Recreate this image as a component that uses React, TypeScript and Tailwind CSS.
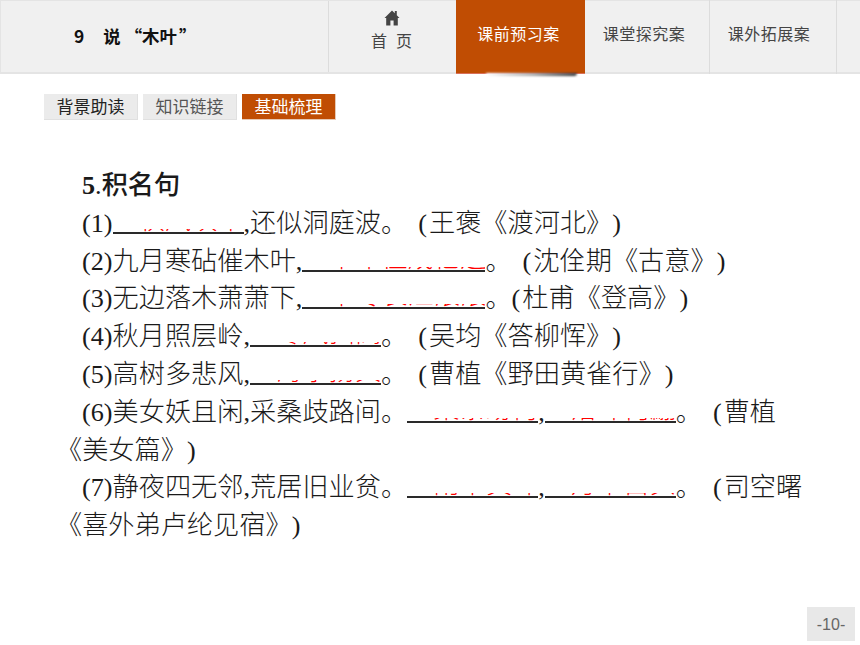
import React from 'react';

const uiFont = "font-['Liberation_Sans','Noto_Sans_CJK_SC',sans-serif]";

// answer text is cut off by the blank: only the feet of the red glyphs show above the line
const Blank: React.FC<{ width: string; text: string }> = ({ width, text }) => (
  <span className={`inline-block ${width} h-[5px] -mb-[2px] overflow-hidden border-b-2 border-[#2a2a2a] align-baseline`}>
    <span className="block -mt-[27px] whitespace-nowrap text-[#ff0000] tracking-[0.2px]">{text}</span>
  </span>
);

const Gap: React.FC = () => <span className="inline-block w-[11px]" />;

const topTabs = [
  { label: '课前预习案', width: 'w-[129px] pr-[4px]', active: true },
  { label: '课堂探究案', width: 'w-[125px] pr-[6px]', active: false },
  { label: '课外拓展案', width: 'w-[127px] pr-[8px]', active: false },
];

const subTabs = [
  { label: '背景助读', active: false, dark: true },
  { label: '知识链接', active: false, dark: false },
  { label: '基础梳理', active: true, dark: false },
];

const App: React.FC = () => {
  return (
    <div className={`w-[860px] h-[645px] bg-white flex flex-col overflow-hidden [text-spacing-trim:space-all] ${uiFont}`}>
      <header className="h-[74px] shrink-0 flex bg-[#f0f0f0] border-t border-b-2 border-[#e4e4e4]">
        <div className="w-[328px] flex items-center pl-[73px] text-[17.4px] font-bold text-[#111] border-l border-[#e4e4e4] font-['Noto_Sans_CJK_SC',sans-serif]">
          <span className="mr-[19px]">9</span>
          <span>说<span className="ml-[4px]">“</span>木叶<span className="ml-[2px]">”</span></span>
        </div>
        <div className="w-[128px] flex flex-col items-center pr-[2px] border-l border-[#dcdcdc] text-[#444]">
          <svg viewBox="0 0 16 16" className="w-[16px] h-[16px] mt-[9px] fill-[#444]">
            <path d="M8 0.5 L10.8 3.2 L10.8 1 L12.8 1 L12.8 5.2 L15.5 8 L13.8 8 L13.8 15.5 L9.6 15.5 L9.6 10.5 L6.4 10.5 L6.4 15.5 L2.2 15.5 L2.2 8 L0.5 8 Z" />
          </svg>
          <span className="mt-[6px] text-[16px] leading-[20px] whitespace-pre">首  页</span>
        </div>
        {topTabs.map((tab) => (
          <div
            key={tab.label}
            className={`${tab.width} relative -mt-px -mb-[2px] pb-[4px] flex items-center justify-center text-[16px] tracking-[0.5px] ${
              tab.active ? 'bg-[#c04d03] text-white border-b border-[#d9705a]' : 'text-[#444] border-r border-[#dcdcdc]'
            }`}
          >
            {tab.label}
            {tab.active && (
              <div className="absolute left-[30px] right-[8px] top-full h-[3px] rounded-b-full blur-[1px] bg-gradient-to-r from-white via-[#aaa] to-[#333]" />
            )}
          </div>
        ))}
        <div className="flex-1" />
      </header>

      <nav className="flex gap-[5px] pl-[44px] pt-[20px]">
        {subTabs.map((tab) => (
          <div
            key={tab.label}
            className={`w-[94px] h-[26px] pt-[2px] flex items-center justify-center text-[17px] border-b border-r ${
              tab.active
                ? 'bg-[#c04d03] text-white border-[#e6c9b5]'
                : `bg-[#ebebeb] border-[#e0e0e0] ${tab.dark ? 'text-[#222]' : 'text-[#555]'}`
            }`}
          >
            {tab.label}
          </div>
        ))}
      </nav>

      <main className="pl-[56px] pt-[47px] w-[820px] text-[26.2px] leading-[37.8px] text-[#1a1a1a] font-light font-['Liberation_Serif','Noto_Sans_CJK_SC',serif]">
        <p className="pl-[26px] font-medium"><b>5</b>.积名句</p>
        <p className="indent-[26px]">(1)<Blank width="w-[131px]" text="秋风吹木叶" />,还似洞庭波。<Gap />(<span className="ml-[2px]">王褒《渡河北》)</span></p>
        <p className="indent-[26px]">(2)九月寒砧催木叶,<Blank width="w-[183px]" text="十年征戍忆辽阳" />。<Gap />(<span className="ml-[2px]">沈佺期《古意》)</span></p>
        <p className="indent-[26px]">(3)无边落木萧萧下,<Blank width="w-[183px]" text="不尽长江滚滚来" />。(<span className="ml-[2px]">杜甫《登高》)</span></p>
        <p className="indent-[26px]">(4)秋月照层岭,<Blank width="w-[131px]" text="寒风扫高木" />。<Gap />(<span className="ml-[2px]">吴均《答柳恽》)</span></p>
        <p className="indent-[26px]">(5)高树多悲风,<Blank width="w-[131px]" text="海水扬其波" />。<Gap />(<span className="ml-[2px]">曹植《野田黄雀行》)</span></p>
        <p className="indent-[26px]">(6)美女妖且闲,采桑歧路间。<Blank width="w-[131px]" text="柔条纷冉冉" />,<Blank width="w-[131px]" text="落叶何翩翩" />。<Gap />(<span className="ml-[2px]">曹植</span><br /><span>《美女篇》)</span></p>
        <p className="indent-[26px]">(7)静夜四无邻,荒居旧业贫。<Blank width="w-[131px]" text="雨中黄叶树" />,<Blank width="w-[131px]" text="灯下白头人" />。<Gap />(<span className="ml-[2px]">司空曙</span><br /><span>《喜外弟卢纶见宿》)</span></p>
      </main>

      <footer className="mt-auto flex justify-end pr-[5px] pb-[4px]">
        <div className="w-[48px] h-[34px] pt-[1px] flex items-center justify-center bg-[#e8e8e8] text-[16px] text-[#666]">-10-</div>
      </footer>
    </div>
  );
};

export default App;
